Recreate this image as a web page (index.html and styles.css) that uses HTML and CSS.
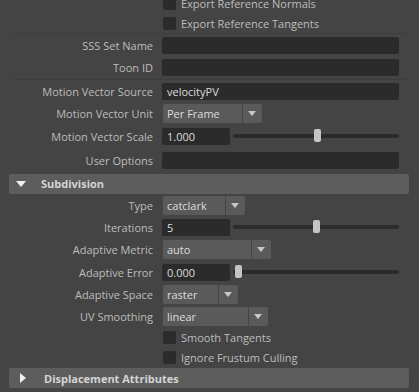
FILE: index.html
```html
<!DOCTYPE html>
<html lang="en">

<head>
    <meta charset="UTF-8">
    <title>Attribute Editor</title>
    <link rel="stylesheet" href="styles.css">
</head>

<body>
    <div class="panel">
        <div class="row row-check">
            <span class="lbl"></span>
            <label class="check"><span class="box"></span>Export Reference Normals</label>
        </div>
        <div class="row row-check">
            <span class="lbl"></span>
            <label class="check"><span class="box"></span>Export Reference Tangents</label>
        </div>
        <div class="sep"></div>
        <div class="row">
            <span class="lbl">SSS Set Name</span>
            <div class="field"></div>
        </div>
        <div class="row">
            <span class="lbl">Toon ID</span>
            <div class="field"></div>
        </div>
        <div class="sep"></div>
        <div class="row">
            <span class="lbl">Motion Vector Source</span>
            <div class="field">velocityPV</div>
        </div>
        <div class="row">
            <span class="lbl">Motion Vector Unit</span>
            <div class="dropdown">
                <span class="dd-main" style="width: 79px">Per Frame</span>
                <span class="dd-arrow"></span>
            </div>
        </div>
        <div class="row">
            <span class="lbl">Motion Vector Scale</span>
            <div class="slider-group">
                <div class="field num">1.000</div>
                <div class="track"><span class="thumb" style="left: 81px"></span></div>
            </div>
        </div>
        <div class="row row-user">
            <span class="lbl">User Options</span>
            <div class="field"></div>
        </div>

        <div class="section first"><span class="tri down"></span>Subdivision</div>

        <div class="subdiv">
            <div class="row">
                <span class="lbl">Type</span>
                <div class="dropdown">
                    <span class="dd-main" style="width: 62px">catclark</span>
                    <span class="dd-arrow"></span>
                </div>
            </div>
            <div class="row">
                <span class="lbl">Iterations</span>
                <div class="slider-group">
                    <div class="field num">5</div>
                    <div class="track"><span class="thumb" style="left: 80px"></span></div>
                </div>
            </div>
            <div class="row">
                <span class="lbl">Adaptive Metric</span>
                <div class="dropdown">
                    <span class="dd-main" style="width: 88px">auto</span>
                    <span class="dd-arrow"></span>
                </div>
            </div>
            <div class="row">
                <span class="lbl">Adaptive Error</span>
                <div class="slider-group">
                    <div class="field num">0.000</div>
                    <div class="track"><span class="thumb" style="left: 2px"></span></div>
                </div>
            </div>
            <div class="row">
                <span class="lbl">Adaptive Space</span>
                <div class="dropdown">
                    <span class="dd-main" style="width: 55px">raster</span>
                    <span class="dd-arrow"></span>
                </div>
            </div>
            <div class="row">
                <span class="lbl">UV Smoothing</span>
                <div class="dropdown">
                    <span class="dd-main" style="width: 85px">linear</span>
                    <span class="dd-arrow"></span>
                </div>
            </div>
            <div class="row row-check">
                <span class="lbl"></span>
                <label class="check"><span class="box"></span>Smooth Tangents</label>
            </div>
            <div class="row row-check">
                <span class="lbl"></span>
                <label class="check"><span class="box"></span>Ignore Frustum Culling</label>
            </div>
        </div>

        <div class="section last"><span class="tri right"></span>Displacement Attributes</div>
    </div>
</body>

</html>
```

FILE: styles.css
```css
* {
    margin: 0;
    padding: 0;
    box-sizing: border-box;
}

body {
    background-color: #444444;
    font-family: "Open Sans", "Noto Sans", sans-serif;
    font-size: 11px;
    color: #bdbdbd;
    overflow: hidden;
}

.panel {
    margin-top: -6px;
    padding-bottom: 20px;
}

.row {
    display: flex;
    align-items: center;
    height: 22.5px;
    padding-right: 20px;
}

.row-check {
    height: 19.5px;
}

.row-user {
    margin-top: 1.5px;
}

.subdiv .row {
    height: 22.3px;
}

.subdiv .row-check {
    height: 19.7px;
}

.lbl {
    flex: 0 0 153px;
    text-align: right;
    margin-right: 9px;
    white-space: nowrap;
}

.field {
    flex: 1;
    height: 17px;
    background-color: #2b2b2b;
    border-radius: 2px;
    color: #dddddd;
    padding-left: 5px;
    line-height: 17px;
}

.sep {
    height: 1px;
    margin: 0 13px 0 13px;
    background-color: #3d3d3d;
}

/* checkbox */
.check {
    display: flex;
    align-items: center;
    margin-left: 1px;
    white-space: nowrap;
}

.check .box {
    width: 13px;
    height: 13px;
    background-color: #2b2b2b;
    border-radius: 2px;
    margin-right: 5px;
}

/* dropdown */
.dropdown {
    display: flex;
    height: 19px;
    margin-left: 1px;
}

.dd-main {
    background-color: #5a5a5a;
    color: #dddddd;
    padding-left: 4px;
    line-height: 19px;
    border-radius: 2px 0 0 2px;
}

.dd-arrow {
    position: relative;
    width: 19px;
    margin-left: 1px;
    background-color: #5a5a5a;
    border-radius: 0 2px 2px 0;
}

.dd-arrow::after {
    content: "";
    position: absolute;
    left: 5px;
    top: 7px;
    border-left: 4.5px solid transparent;
    border-right: 4.5px solid transparent;
    border-top: 5px solid #c8c8c8;
}

/* slider */
.slider-group {
    flex: 1;
    display: flex;
    align-items: center;
}

.slider-group .field.num {
    flex: 0 0 68px;
}

.track {
    position: relative;
    flex: 1;
    height: 4px;
    margin-left: 3px;
    background-color: #2b2b2b;
    border-radius: 2px;
}

.thumb {
    position: absolute;
    top: -5px;
    width: 7px;
    height: 13px;
    background-color: #c4c4c4;
    border-radius: 2px;
}

/* section header */
.section {
    display: flex;
    align-items: center;
    height: 20px;
    margin: 0 10px 0 9px;
    background-color: #5d5d5d;
    border-radius: 2px;
    font-weight: bold;
    color: #d4d4d4;
}

.section.first {
    margin-top: 2px;
    margin-bottom: 0.5px;
}

.section.last {
    margin-top: 1px;
}

.tri {
    width: 0;
    height: 0;
    margin-right: 15px;
}

.tri.down {
    margin-left: 7px;
    border-left: 5.5px solid transparent;
    border-right: 5.5px solid transparent;
    border-top: 6px solid #f0f0f0;
}

.tri.right {
    margin-left: 11px;
    margin-right: 18px;
    border-top: 5.5px solid transparent;
    border-bottom: 5.5px solid transparent;
    border-left: 6px solid #f0f0f0;
}
```
